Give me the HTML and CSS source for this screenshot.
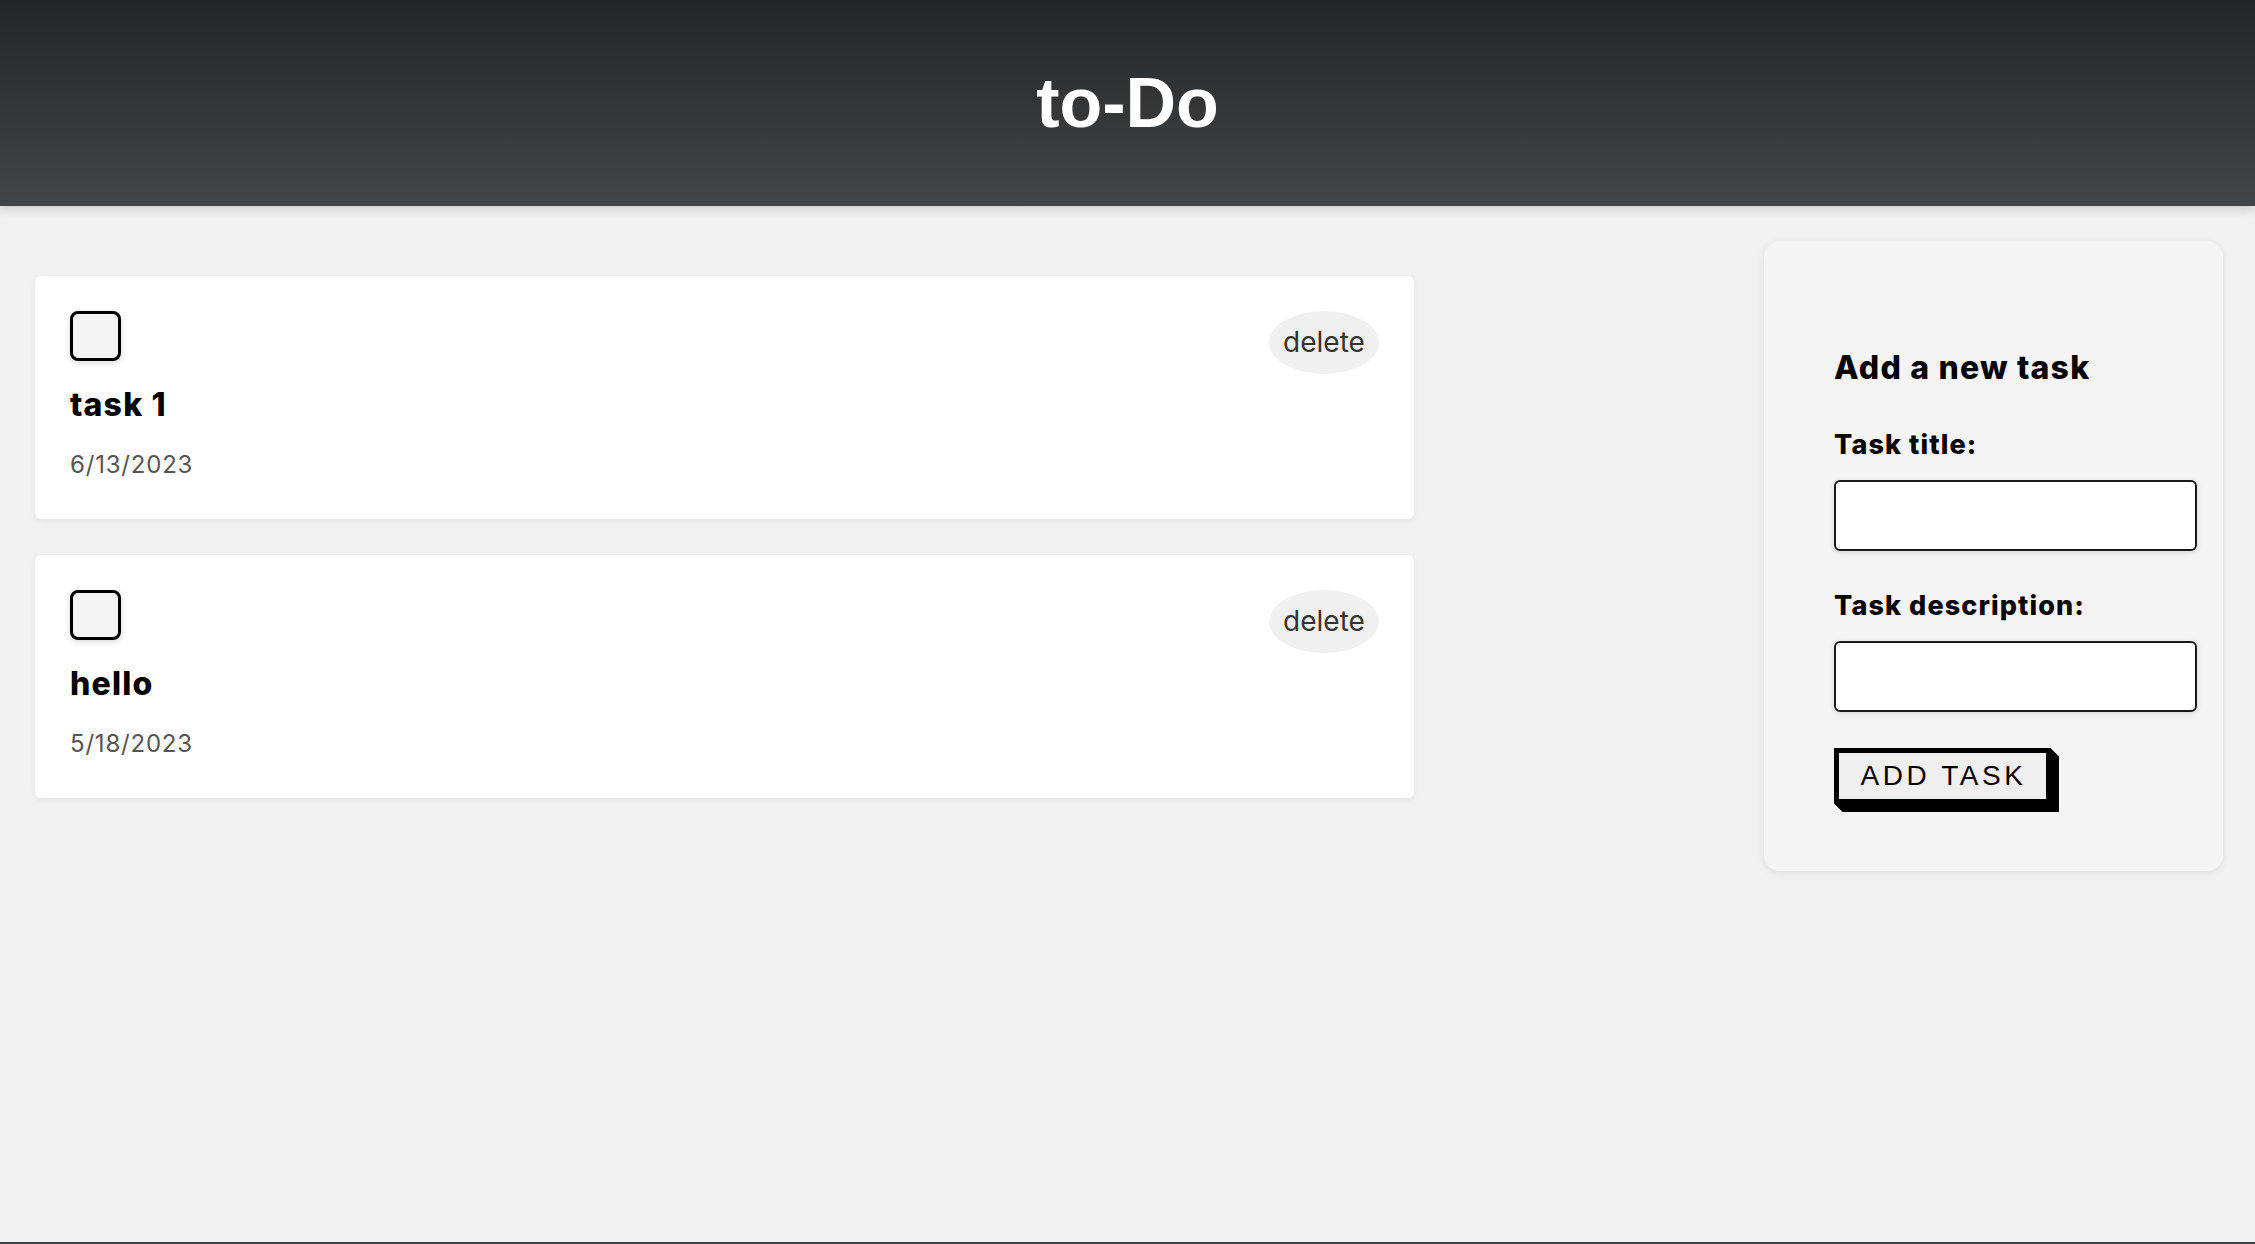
FILE: index.html
```html
<!DOCTYPE html>
<html lang="en">
<head>
<meta charset="utf-8">
<title>to-Do</title>
<link rel="stylesheet" href="styles.css">
</head>
<body>
<header class="app-header">
  <h1 class="app-title">to-Do</h1>
</header>
<main class="app-main">
  <section class="task-list">
    <article class="task-card">
      <div class="task-body">
        <span class="task-check"></span>
        <h3 class="task-title">task 1</h3>
        <p class="task-date">6/13/2023</p>
      </div>
      <button class="task-delete">delete</button>
    </article>
    <article class="task-card">
      <div class="task-body">
        <span class="task-check"></span>
        <h3 class="task-title">hello</h3>
        <p class="task-date">5/18/2023</p>
      </div>
      <button class="task-delete">delete</button>
    </article>
  </section>
  <aside class="task-form">
    <h2 class="form-heading">Add a new task</h2>
    <label class="form-label form-label-first">Task title:</label>
    <input class="form-input" type="text">
    <label class="form-label">Task description:</label>
    <input class="form-input" type="text">
    <button class="form-button">ADD TASK</button>
  </aside>
</main>
<footer class="app-footer"></footer>
</body>
</html>
```

FILE: styles.css
```css
* { box-sizing: border-box; }

html, body {
  margin: 0;
  padding: 0;
}

body {
  background: #f1f1f1;
  font-family: Inter, "Open Sans", sans-serif;
  color: #000;
}

.app-header {
  height: 206px;
  background: linear-gradient(to bottom, #242527, #444547);
  box-shadow: 0 4px 10px rgba(0, 0, 0, 0.15);
  display: flex;
  align-items: center;
  justify-content: center;
  position: relative;
  z-index: 1;
}

.app-title {
  margin: 0;
  font-family: "Liberation Sans", Arial, sans-serif;
  font-weight: 700;
  font-size: 70px;
  line-height: 80px;
  color: #fff;
}

.app-main {
  min-height: 1036px;
  display: flex;
  justify-content: space-between;
  align-items: flex-start;
  padding: 35px 32px 0 35px;
}

.task-list {
  width: 1379px;
  padding-top: 35px;
  display: flex;
  flex-direction: column;
  gap: 36px;
}

.task-card {
  height: 243px;
  background: #fff;
  border-radius: 6px;
  box-shadow: 0 2px 6px rgba(0, 0, 0, 0.06);
  padding: 35px;
  display: flex;
  justify-content: space-between;
  align-items: flex-start;
}

.task-body {
  display: flex;
  flex-direction: column;
  align-items: flex-start;
}

.task-check {
  display: block;
  width: 51px;
  height: 50px;
  border: 3px solid #000;
  border-radius: 8px;
  background: #f4f4f4;
  box-shadow: 0 2px 6px rgba(0, 0, 0, 0.15);
}

.task-title {
  margin: 24px 0 0;
  font-size: 32px;
  line-height: 40px;
  font-weight: 800;
  letter-spacing: 1.2px;
}

.task-date {
  margin: 25px 0 0;
  font-size: 24px;
  line-height: 30px;
  letter-spacing: 0.8px;
  color: #555;
}

.task-delete {
  width: 110px;
  height: 63px;
  padding: 0;
  border: none;
  border-radius: 50%;
  background: #f0f0f0;
  font-family: Inter, "Open Sans", sans-serif;
  font-size: 28px;
  line-height: 63px;
  color: #333;
}

.task-form {
  width: 459px;
  background: #f4f4f4;
  border-radius: 16px;
  box-shadow: 0 2px 8px rgba(0, 0, 0, 0.08);
  padding: 107px 26px 67px 70px;
  display: flex;
  flex-direction: column;
  align-items: flex-start;
}

.form-heading {
  margin: 0;
  font-size: 32px;
  line-height: 40px;
  font-weight: 800;
  letter-spacing: 1.2px;
}

.form-label {
  display: block;
  margin-top: 38px;
  font-size: 27px;
  line-height: 34px;
  font-weight: 800;
  letter-spacing: 1.1px;
}

.form-label-first {
  margin-top: 40px;
}

.form-input {
  display: block;
  margin-top: 18px;
  width: 363px;
  height: 71px;
  border: 2px solid #1a1a1a;
  border-radius: 6px;
  background: #fff;
  box-shadow: 0 2px 6px rgba(0, 0, 0, 0.1);
}

.form-button {
  margin-top: 36px;
  width: 217px;
  height: 56px;
  padding: 0 0 0 2px;
  border: 5px solid #000;
  background: #efefef;
  font-family: "Liberation Sans", Arial, sans-serif;
  font-size: 28px;
  letter-spacing: 3.6px;
  color: #000;
  text-align: center;
  box-shadow:
    1px 1px 0 #000, 2px 2px 0 #000, 3px 3px 0 #000, 4px 4px 0 #000,
    5px 5px 0 #000, 6px 6px 0 #000, 7px 7px 0 #000, 8px 8px 0 #000;
}

.app-footer {
  height: 2px;
  background: #3f4042;
}
```
